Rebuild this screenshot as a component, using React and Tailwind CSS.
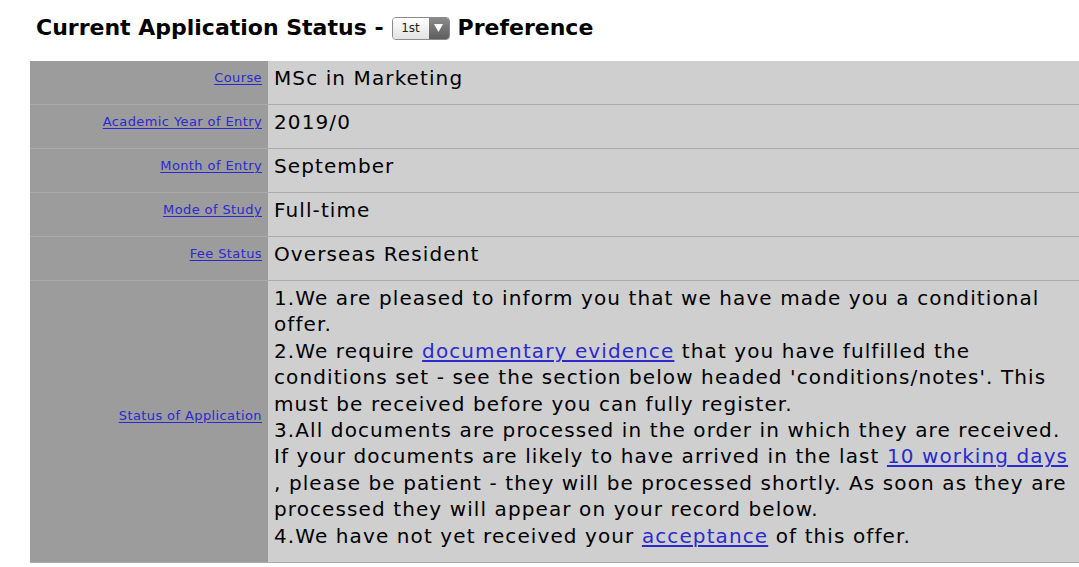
import React from "react";

const rows = [
  { label: "Course", value: "MSc in Marketing" },
  { label: "Academic Year of Entry", value: "2019/0" },
  { label: "Month of Entry", value: "September" },
  { label: "Mode of Study", value: "Full-time" },
  { label: "Fee Status", value: "Overseas Resident" },
];

const Link = ({ children }) => (
  <a href="#" className="text-[#2a2ad0] underline underline-offset-2">
    {children}
  </a>
);

const PreferenceSelect = () => (
  <span className="inline-flex h-[23px] w-[58px] overflow-hidden rounded-[4px] border border-[#8a8a8a] align-middle">
    <span className="flex flex-1 items-center justify-center bg-gradient-to-b from-white to-[#e2e2e2] text-[12px] font-normal text-[#222]">
      1st
    </span>
    <span className="flex w-[20px] items-center justify-center bg-gradient-to-b from-[#8a8a8a] to-[#5e5e5e]">
      <svg width="9" height="8" viewBox="0 0 9 8">
        <path d="M0 0 H9 L4.5 8 Z" fill="#fff" />
      </svg>
    </span>
  </span>
);

export default function App() {
  return (
    <div
      className="h-[567px] w-[1079px] overflow-hidden bg-white text-black"
      style={{ fontFamily: '"DejaVu Sans", Verdana, sans-serif' }}
    >
      <h1 className="flex items-center gap-[8px] pl-[36px] pt-[14px] text-[22px] font-bold leading-[28px]">
        <span>Current Application Status -</span>
        <PreferenceSelect />
        <span>Preference</span>
      </h1>

      <div className="ml-[30px] mt-[19px] flex flex-col bg-[#b8b8b8]">
        {rows.map((row) => (
          <div key={row.label} className="flex h-[44px] border-b border-[#ababab]">
            <div className="flex w-[238px] shrink-0 items-center justify-end bg-[#9c9c9c] pb-[10px] pr-[6px] text-[13px] tracking-[0.4px]">
              <Link>{row.label}</Link>
            </div>
            <div className="flex flex-1 items-center bg-[#cfcfcf] pb-[10px] pl-[6px] text-[20px] tracking-[1.1px]">
              {row.value}
            </div>
          </div>
        ))}
        <div className="flex h-[282px] border-b border-[#ababab]">
          <div className="flex w-[238px] shrink-0 items-center justify-end bg-[#9c9c9c] pb-[12px] pr-[6px] text-[13px] tracking-[0.4px]">
            <Link>Status of Application</Link>
          </div>
          <div className="flex-1 bg-[#cfcfcf] pl-[6px] pt-[4px] text-[20px] leading-[26.4px] tracking-[1.1px]">
            1.We are pleased to inform you that we have made you a conditional
            <br />
            offer.
            <br />
            2.We require <Link>documentary evidence</Link> that you have fulfilled the
            <br />
            conditions set - see the section below headed 'conditions/notes'. This
            <br />
            must be received before you can fully register.
            <br />
            3.All documents are processed in the order in which they are received.
            <br />
            If your documents are likely to have arrived in the last <Link>10 working days</Link>
            <br />
            , please be patient - they will be processed shortly. As soon as they are
            <br />
            processed they will appear on your record below.
            <br />
            4.We have not yet received your <Link>acceptance</Link> of this offer.
          </div>
        </div>
      </div>
    </div>
  );
}
